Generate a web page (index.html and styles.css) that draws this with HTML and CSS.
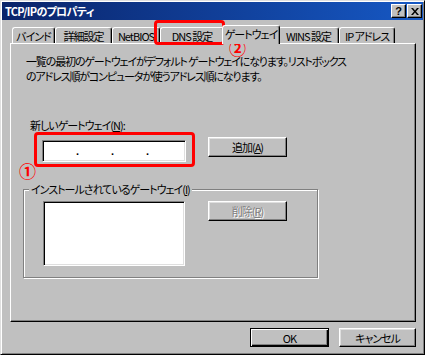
FILE: index.html
```html
<!DOCTYPE html>
<html lang="ja">
<head>
<meta charset="UTF-8">
<meta name="viewport" content="width=device-width, initial-scale=1.0">
<title>TCP/IPのプロパティ</title>
<link rel="stylesheet" href="styles.css">
</head>
<body>
<div class="window">
  <div class="titlebar">
    <span class="title">TCP/IPのプロパティ</span>
    <div class="caption-btns">
      <span class="cbtn help">?</span>
      <span class="cbtn close">
        <svg width="8" height="7" viewBox="0 0 8 7"><path d="M0 0h2l2 2.5L6 0h2L5 3.5 8 7H6L4 4.5 2 7H0l3-3.5z" fill="#000"/></svg>
      </span>
    </div>
  </div>

  <div class="tabs">
    <div class="tab tab-bind">バインド</div>
    <div class="tab tab-detail">詳細設定</div>
    <div class="tab tab-netbios">NetBIOS</div>
    <div class="tab tab-dns">DNS 設定</div>
    <div class="tab tab-gw active">ゲートウェイ</div>
    <div class="tab tab-wins">WINS 設定</div>
    <div class="tab tab-ip">IP アドレス</div>
  </div>

  <div class="panel">
    <p class="desc">一覧の最初のゲートウェイがデフォルト ゲートウェイになります。リストボックス<br>のアドレス順がコンピュータが使うアドレス順になります。</p>
    <div class="label">新しいゲートウェイ(<u>N</u>):</div>
    <div class="row">
      <div class="ipbox">
        <span class="dot">.</span><span class="dot">.</span><span class="dot">.</span>
      </div>
      <button class="btn btn-add">追加(<u>A</u>)</button>
    </div>
    <div class="group">
      <span class="legend">インストールされているゲートウェイ(<u>I</u>)</span>
      <div class="group-row">
        <div class="listbox"></div>
        <button class="btn btn-remove" disabled>削除(<u>R</u>)</button>
      </div>
    </div>
  </div>

  <div class="footer">
    <button class="btn btn-ok">OK</button>
    <button class="btn btn-cancel">キャンセル</button>
  </div>

  <!-- annotations drawn over the dialog -->
  <div class="mark mark-dns"></div>
  <div class="num num-2">②</div>
  <div class="mark mark-ip"></div>
  <div class="num num-1">①</div>
</div>
</body>
</html>
```

FILE: styles.css
```css
* {
  box-sizing: border-box;
}
body {
  margin: 0;
  background-color: #c0c0c0;
  font-family: "Noto Sans CJK JP", "Noto Sans", sans-serif;
  font-size: 11px;
  letter-spacing: -1px;
  font-feature-settings: "palt";
  color: #000;
}
u {
  text-decoration: underline;
  text-underline-offset: 1px;
}
.window {
  position: relative;
  width: 425px;
  height: 355px;
  padding: 1px;
  background-color: #c0c0c0;
  border: 1px solid;
  border-color: #dfdfdf #000 #000 #dfdfdf;
  box-shadow: inset 1px 1px #fff, inset -1px -1px #808080;
}

/* title bar */
.titlebar {
  height: 18px;
  display: flex;
  align-items: center;
  justify-content: space-between;
  padding: 0 1px 0 3px;
  background: linear-gradient(90deg, #0a246a, #1658c4);
}
.title {
  color: #fff;
  font-weight: bold;
  letter-spacing: -0.7px;
  line-height: 14px;
}
.caption-btns {
  display: flex;
  gap: 1px;
}
.cbtn {
  width: 15px;
  height: 14px;
  display: flex;
  align-items: center;
  justify-content: center;
  background-color: #c0c0c0;
  border: 1px solid;
  border-color: #fff #000 #000 #fff;
  box-shadow: inset -1px -1px #808080;
  font-family: "Liberation Sans", sans-serif;
  font-weight: bold;
  font-size: 11px;
  letter-spacing: 0;
  line-height: 12px;
}

/* tabs */
.tabs {
  display: flex;
  align-items: flex-end;
  height: 18px;
  margin-top: 5px;
  padding-left: 10px;
}
.tab {
  height: 16px;
  display: flex;
  align-items: center;
  justify-content: center;
  line-height: 14px;
  white-space: nowrap;
  border-top: 1px solid #fff;
  border-left: 1px solid #fff;
  border-right: 1px solid #000;
  border-radius: 3px 3px 0 0;
  box-shadow: inset -1px 0 #808080;
}
.tab-bind { width: 43px; }
.tab-detail { width: 57px; }
.tab-netbios { width: 48px; }
.tab-dns { width: 64px; }
.tab-gw { width: 54px; }
.tab-wins { width: 61px; }
.tab-ip { width: 56px; }
.tab.active {
  position: relative;
  z-index: 1;
  width: 58px;
  height: 19px;
  margin: 0 -2px -1px;
  padding-bottom: 2px;
  background-color: #c0c0c0;
}

/* panel */
.panel {
  width: 406px;
  height: 279px;
  margin-left: 8px;
  border: 1px solid;
  border-color: #fff #000 #000 #fff;
  box-shadow: inset -1px -1px #808080;
}
.desc {
  margin: 10px 0 0;
  padding-left: 15px;
  line-height: 15px;
  letter-spacing: -1.15px;
  white-space: nowrap;
}
.label {
  margin-top: 34px;
  padding-left: 19px;
  line-height: 14px;
}
.row {
  display: flex;
  align-items: flex-start;
  margin-top: 5px;
  padding-left: 31px;
}
.ipbox {
  width: 144px;
  height: 22px;
  margin-top: 3px;
  display: flex;
  padding-left: 33px;
  gap: 32px;
  background-color: #fff;
  border: 1px solid;
  border-color: #808080 #fff #fff #808080;
  box-shadow: inset 1px 1px #000, inset -1px -1px #dfdfdf;
}
.dot {
  width: 3px;
  line-height: 20px;
  font-family: "Liberation Sans", sans-serif;
  font-weight: bold;
  letter-spacing: 0;
}
.btn {
  height: 20px;
  padding: 0;
  background-color: #c0c0c0;
  border: 1px solid;
  border-color: #fff #000 #000 #fff;
  box-shadow: inset -1px -1px #808080, inset 1px 1px #dfdfdf;
  font: inherit;
  letter-spacing: inherit;
  line-height: 14px;
  color: #000;
}
.btn-add {
  width: 79px;
  margin-left: 22px;
}
.btn[disabled] {
  color: #808080;
  text-shadow: 1px 1px #fff;
}

/* group box */
.group {
  width: 295px;
  height: 89px;
  margin: 27px 0 0 12px;
  border: 1px solid #808080;
  box-shadow: inset 1px 1px #fff, 1px 1px #fff;
}
.legend {
  display: table;
  margin: -8px 0 0 5px;
  padding: 0 2px;
  line-height: 14px;
  background-color: #c0c0c0;
}
.group-row {
  display: flex;
  align-items: flex-start;
  margin-top: 5px;
  padding-left: 19px;
}
.listbox {
  width: 142px;
  height: 65px;
  background-color: #fff;
  border: 1px solid;
  border-color: #808080 #fff #fff #808080;
  box-shadow: inset 1px 1px #000, inset -1px -1px #dfdfdf;
}
.btn-remove {
  width: 79px;
  margin-left: 23px;
}

/* dialog buttons */
.footer {
  display: flex;
  justify-content: flex-end;
  gap: 10px;
  padding: 6px 7px 0 0;
}
.btn-ok {
  width: 79px;
  height: 19px;
  border-color: #000;
  box-shadow: inset 1px 1px #fff, inset -1px -1px #000, inset -2px -2px #808080;
}
.btn-cancel {
  width: 77px;
  height: 19px;
}

/* red annotations */
.mark {
  position: absolute;
  border: 3px solid #f00;
  border-radius: 4px;
}
.mark-dns {
  left: 153px;
  top: 19px;
  width: 71px;
  height: 25px;
}
.mark-ip {
  left: 33px;
  top: 131px;
  width: 161px;
  height: 35px;
}
.num {
  position: absolute;
  color: #f00;
  font-size: 17px;
  font-weight: bold;
  line-height: 15px;
  letter-spacing: 0;
  font-feature-settings: normal;
}
.num-2 {
  left: 228px;
  top: 39px;
}
.num-1 {
  left: 18px;
  top: 162px;
}
```
